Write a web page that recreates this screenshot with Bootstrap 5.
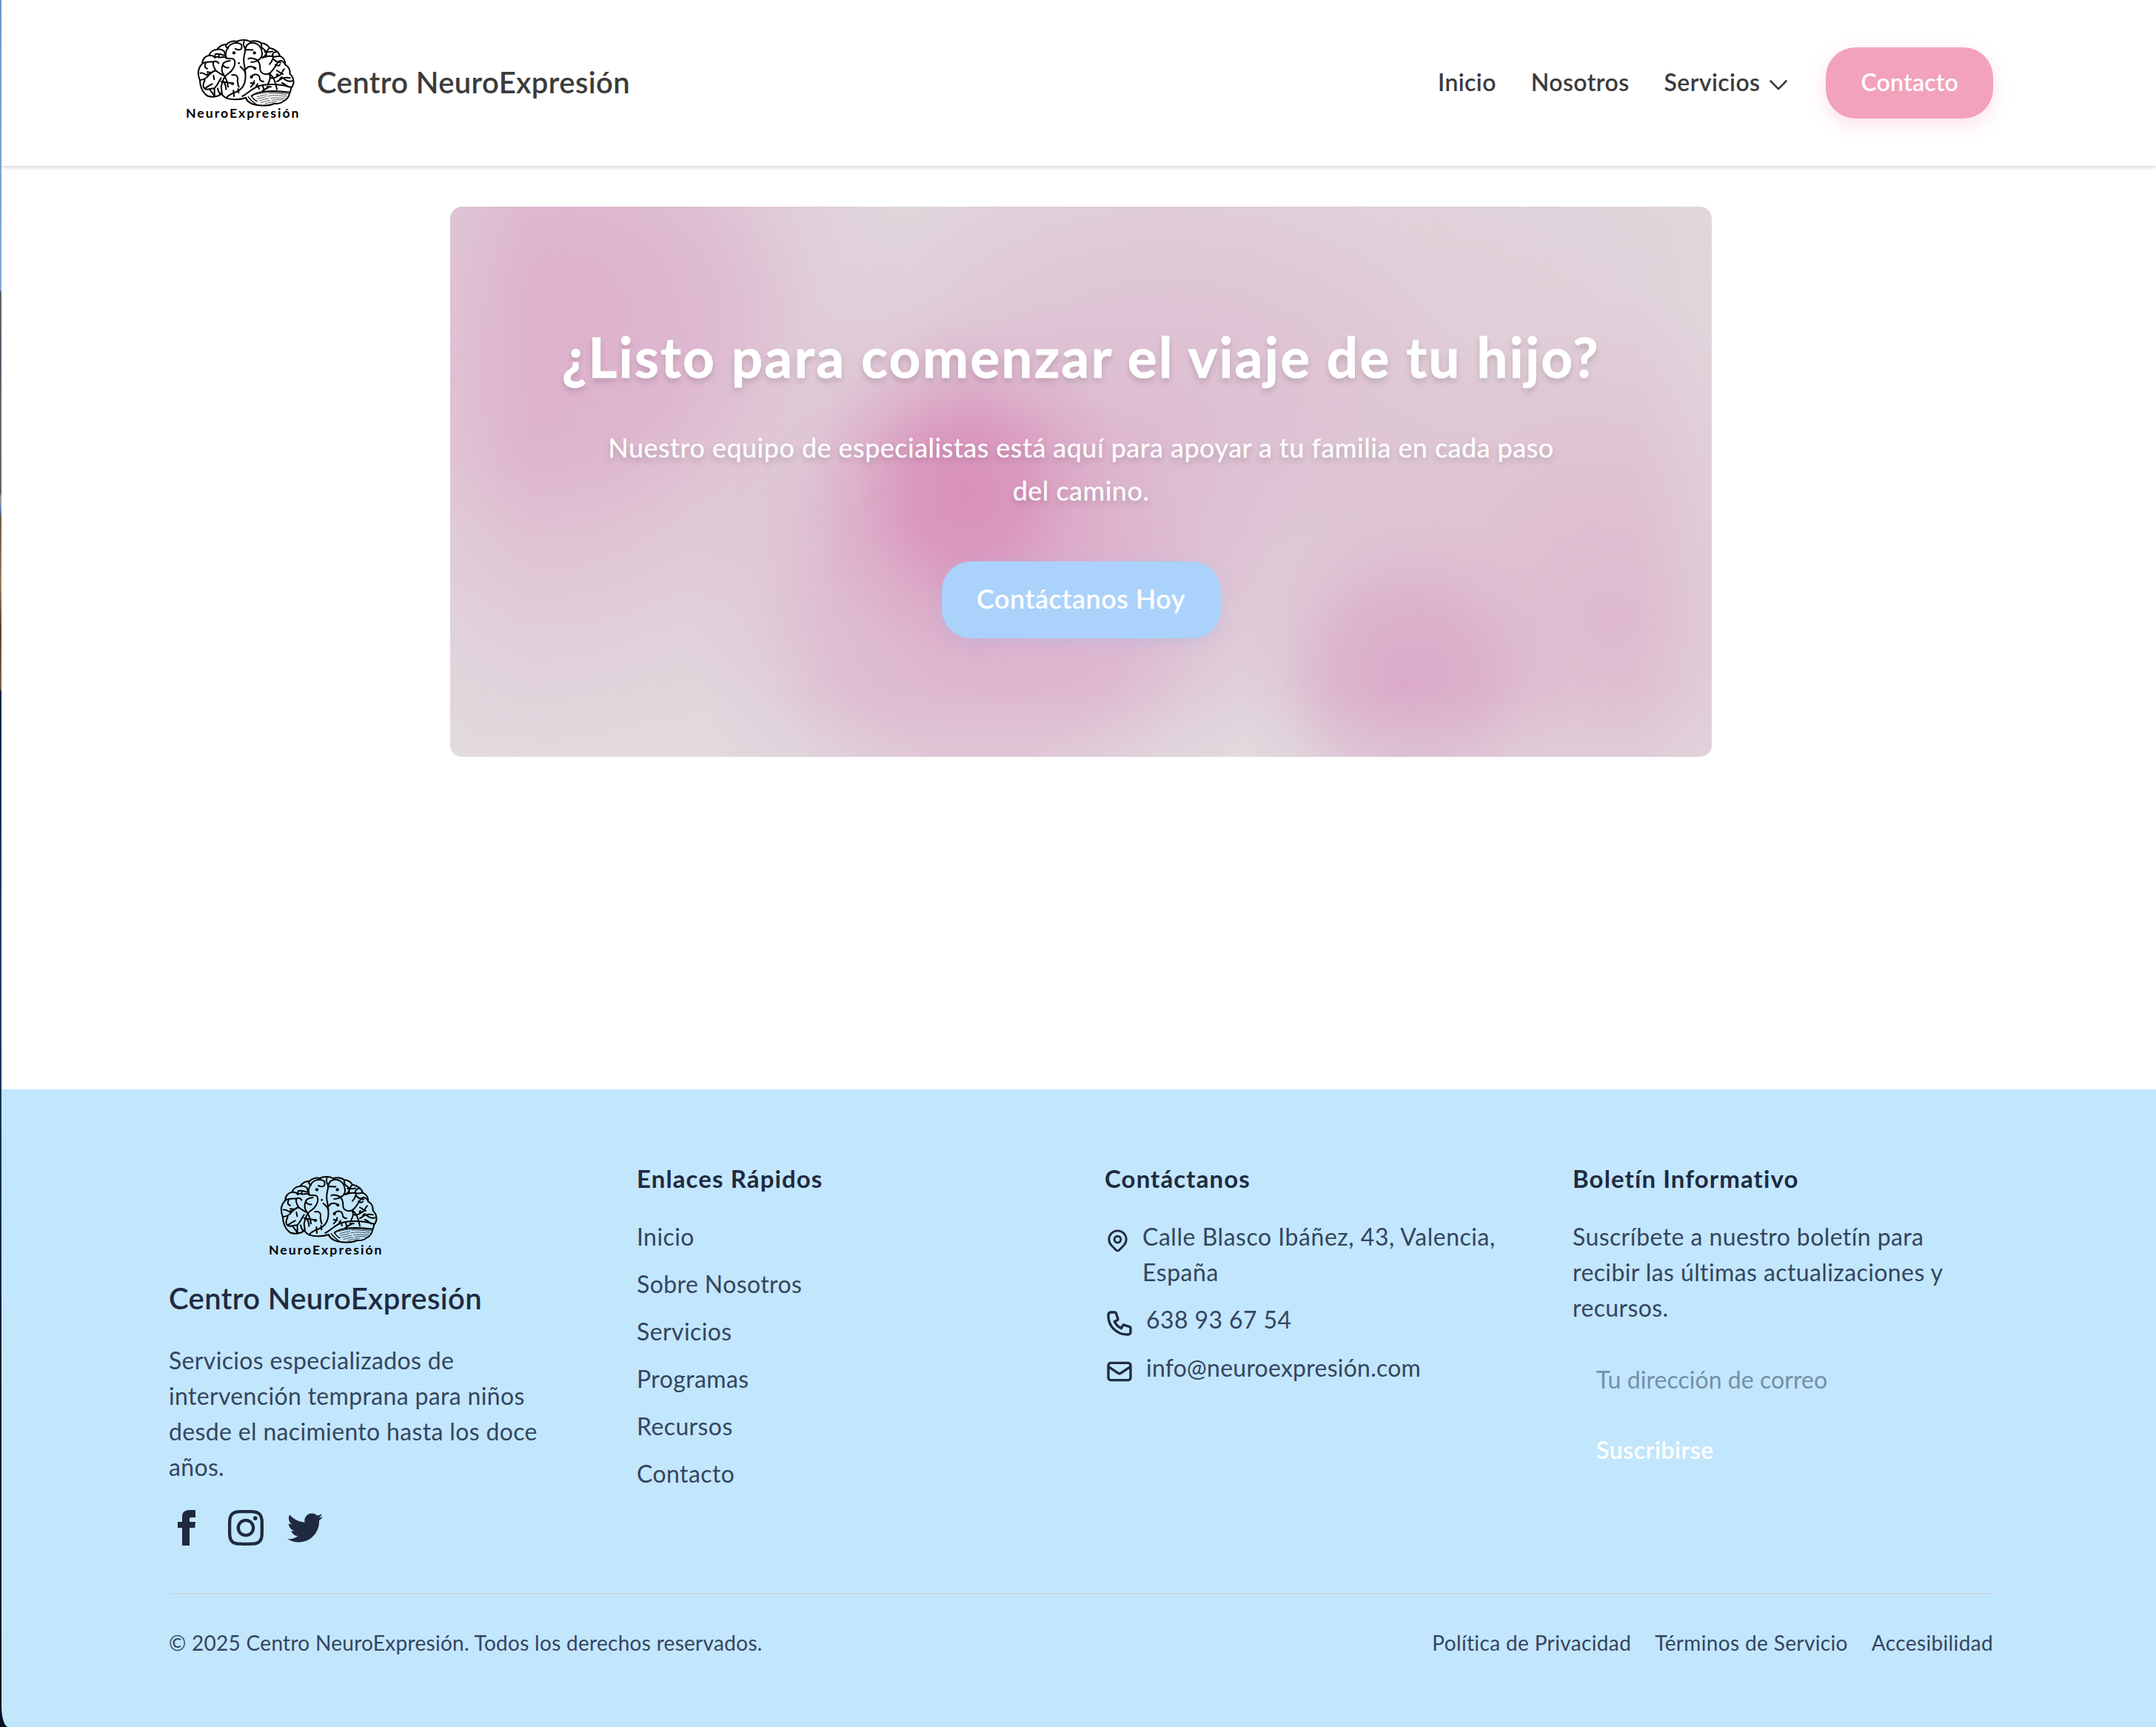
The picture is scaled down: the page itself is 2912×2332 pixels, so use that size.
<!DOCTYPE html>
<html lang="es">
<head>
<meta charset="utf-8">
<meta name="viewport" content="width=device-width, initial-scale=1">
<title>Centro NeuroExpresión</title>
<link href="https://cdn.jsdelivr.net/npm/bootstrap@5.3.0/dist/css/bootstrap.min.css" rel="stylesheet">
<script src="https://cdn.jsdelivr.net/npm/bootstrap@5.3.0/dist/js/bootstrap.bundle.min.js"></script>
<style>
  body {
    font-family: Lato, "Open Sans", sans-serif;
    font-size: 32px;
    line-height: 48px;
    letter-spacing: .4px;
    color: #34455e;
    /* desktop wallpaper showing along the window's left edge */
    background: linear-gradient(#6d97c8 0, #86a9d3 392px, #5f6468 394px, #56606f 500px, #6f6a62 560px, #5d6a5c 665px, #b49c86 672px, #5f8ec4 688px, #6b5c46 700px, #9a835f 790px, #5a452f 850px, #7c6748 930px, #0f2648 934px, #223f6d 1300px, #0b1a33 1900px, #061225 2332px);
  }
  .window { min-height: 2332px; margin-left: 2px; background: #c2e6fc; border-bottom-left-radius: 9px 28px; overflow: hidden; }
  .gutter { padding-left: 226px; padding-right: 220px; }
  .topbar { height: 224px; background: #fff; box-shadow: 0 1px 6px rgba(0,0,0,.22); position: relative; z-index: 1; }
  .topbar a { color: #3b3b3b; text-decoration: none; }
  .brand-name { font-size: 40px; line-height: 60px; font-weight: 600; letter-spacing: .38px; padding-bottom: 2px; }
  .topbar .brand-name { color: #3b3b3b; }
  .logo { width: 200px; height: 150px; flex: none; display: block; }
  .topbar .logo { margin: -14px -2px 0 2px; }
  .menu { gap: 47px; font-weight: 600; }
  .menu > a { padding-bottom: 2px; }
  .chevron { width: 24px; height: 14px; margin: 7px 5px 0 13px; }
  .menu .pill { background: #f2a2bb; color: #fff; border-radius: 40px; padding: 23px 47px 25px; letter-spacing: .2px; box-shadow: 0 8px 24px rgba(242,120,160,.22); }
  main { height: 1247px; background: #fff; padding-top: 55px; }
  .hero {
    width: 1704px; height: 743px; border-radius: 16px; padding-top: 158px; color: #fff; margin-left: 606px;
    background:
      linear-gradient(90deg, rgba(226,220,224,.28), transparent 110px, transparent 1600px, rgba(226,218,222,.4)),
      linear-gradient(0deg, rgba(226,220,224,.3), transparent 90px),
      radial-gradient(ellipse 215px 230px at 695px 385px, rgba(216,135,180,.78), rgba(216,138,182,.66) 35%, rgba(217,150,188,.28) 68%, transparent),
      radial-gradient(ellipse 225px 235px at 1290px 645px, rgba(216,158,195,.72), rgba(216,162,197,.55) 45%, rgba(218,170,200,.2) 75%, transparent),
      radial-gradient(ellipse 400px 420px at 715px 530px, rgba(220,165,199,.72), rgba(220,168,200,.58) 50%, rgba(221,180,206,.22) 78%, transparent),
      radial-gradient(ellipse 480px 420px at 930px 320px, rgba(219,172,204,.55), rgba(220,180,207,.38) 50%, transparent),
      radial-gradient(ellipse 470px 470px at 160px 120px, rgba(220,165,199,.72), rgba(220,170,202,.58) 42%, rgba(222,185,208,.25) 72%, transparent),
      radial-gradient(ellipse 560px 400px at 70px 340px, rgba(223,175,200,.6), rgba(223,182,204,.35) 50%, transparent),
      radial-gradient(ellipse 450px 440px at 1570px 560px, rgba(221,172,200,.68), rgba(222,180,203,.48) 50%, transparent),
      radial-gradient(ellipse 900px 500px at 1200px 240px, rgba(222,192,208,.5), transparent),
      #e1d8dd;
  }
  .hero h1 { font-size: 74px; line-height: 90px; font-weight: 700; letter-spacing: 2.6px; margin-bottom: 49px; -webkit-text-stroke: 1px #fff; text-shadow: 0 5px 9px rgba(0,0,0,.16); }
  .hero p { font-size: 36px; line-height: 57.6px; width: 1300px; margin-bottom: 67px; font-weight: 500; letter-spacing: .43px; text-shadow: 0 5px 9px rgba(0,0,0,.16); }
  .hero .pill { display: inline-block; width: 377px; height: 104px; border-radius: 40px; padding-top: 23px; line-height: 54px; font-size: 36px; font-weight: 600; letter-spacing: .46px; color: #fff; background: #abd2fb; box-shadow: 0 6px 20px rgba(150,180,240,.3); text-decoration: none; }
  footer { padding-top: 96px; }
  footer a { color: inherit; text-decoration: none; }
  .foot-cols { display: grid; grid-template-columns: repeat(4, 568px); column-gap: 64px; height: 519px; }
  .foot-cols .logo { margin: -2px 0 8px 114px; }
  .foot-cols .brand-name { color: #1f2a40; margin-bottom: 30px; padding: 0; }
  .foot-cols h2 { font-size: 33px; line-height: 48px; font-weight: 700; letter-spacing: 1.1px; color: #1f2a40; margin-bottom: 31px; }
  .foot-cols ul { display: flex; flex-direction: column; gap: 16px; margin: 0; }
  .foot-cols .blurb { margin-bottom: 34px; padding-right: 60px; letter-spacing: .34px; }
  .foot-cols svg { color: #1f2a40; }
  .social { gap: 32px; }
  .social svg { width: 48px; height: 48px; }
  .contact li { display: flex; gap: 16px; }
  .contact li:first-child { letter-spacing: .53px; }
  .contact li:last-child { letter-spacing: .24px; }
  .contact svg { width: 40px; height: 40px; margin-top: 9px; flex: 0 0 auto; }
  .contact li:first-child svg { width: 35px; }
  .mail-field { display: block; width: 100%; border: 0; outline: 0; background: none; padding: 24px 32px; margin-top: 24px; height: 96px; font: inherit; letter-spacing: .05px; }
  .mail-field::placeholder { color: #7390a6; opacity: 1; }
  .send { display: block; border: 0; background: none; padding: 24px 32px; color: #fff; font: inherit; font-weight: 600; letter-spacing: .55px; }
  .legal { border-top: 2px solid #c6d8e6; padding-top: 44px; font-size: 28px; line-height: 42px; letter-spacing: .29px; margin-top: 65px; }
  .legal nav { gap: 32px; letter-spacing: .36px; }
</style>
</head>
<body>
<svg class="d-none">
  <symbol id="brain" viewBox="0 0 600 450">
    <g fill="none" stroke="#000" stroke-width="6" stroke-linecap="round" stroke-linejoin="round">
      <path d="M120 235C110 210 112 185 130 168C130 150 140 138 157 134C162 120 176 111 190 110C200 96 213 89 228 90C240 79 256 75 270 78C285 70 310 70 323 78C342 74 360 78 369 85C385 86 396 94 402 104C424 108 441 121 444 137C459 143 466 156 466 172C480 180 486 195 485 210C502 224 504 250 491 264C486 274 489 280 484 286C480 306 470 315 458 320C448 330 432 331 420 330C395 342 350 338 330 330C318 325 308 315 306 306C285 314 250 316 228 308C215 301 207 292 209 284C200 307 152 307 141 290C128 279 120 255 120 235Z"/>
      <path d="M299 78C291 92 303 100 304 112C302 130 295 142 298 162C302 185 307 208 304 232C302 252 290 272 268 282C250 288 232 300 226 307"/>
      <path d="M288 90C294 108 284 118 264 108M285 88C262 78 240 88 232 106C222 122 222 134 228 146C242 150 258 140 262 160C264 178 250 198 238 206C222 214 212 232 206 262L209 284"/>
      <path d="M304 112C306 90 322 80 340 84C358 88 370 104 372 124C374 144 356 160 328 162M304 112C318 110 326 114 334 112"/>
      <path d="M316 148C328 142 340 148 350 152C366 164 364 180 364 192C366 208 384 214 400 208C416 200 428 172 440 158C452 152 458 158 466 172"/>
      <path d="M369 86C366 98 372 106 382 112C396 124 386 138 372 144M402 104C390 116 386 124 390 136M372 144C390 140 404 132 418 140M382 120C396 122 404 122 414 118M418 140C408 128 420 120 430 120M418 140L444 137"/>
      <path d="M190 110C212 106 224 118 222 134C210 134 198 124 182 130M157 134C172 134 178 136 180 144C190 134 198 146 208 142C218 140 224 142 228 146M182 130L180 144M197 133L196 143M228 90C220 96 230 104 234 106"/>
      <path d="M130 168C142 158 160 162 176 160C186 156 192 160 196 166M176 160C168 172 180 186 184 196M144 164C140 174 136 184 150 188M184 196C196 204 208 214 218 216C208 204 206 186 212 174C216 160 228 158 242 156M212 174C222 184 228 186 236 184M184 196C170 200 164 204 156 214M166 204L150 202M122 206C132 202 140 210 150 216M175 216L178 232"/>
      <path d="M120 235C136 232 150 226 156 214M140 234C132 252 130 262 140 270C150 258 160 256 170 250M140 270C150 276 160 268 178 268C190 258 196 240 206 226M158 270C166 282 176 290 178 300M178 268C182 282 176 290 180 298M192 268C196 278 194 286 206 292M214 240C226 252 226 262 226 272M206 240L256 248M218 216C226 228 232 240 234 262"/>
      <path d="M250 214C272 208 276 226 272 238C276 248 272 256 278 262M256 276L258 300M275 270L277 286M284 180C296 190 302 196 304 206M306 190C316 176 334 176 344 188M328 222C338 206 358 210 362 224C362 236 368 240 378 240M340 238C340 250 334 254 326 262M326 246L340 248M354 250L348 258"/>
      <path d="M292 300C318 286 330 268 360 258C392 248 450 250 491 264M330 298C350 282 400 272 484 284M356 258L360 270M374 254L378 270M398 264C384 270 376 276 372 280M392 262L408 262"/>
      <path d="M400 208C410 222 402 236 396 250M400 208C418 216 426 240 432 272M408 226C420 228 432 222 440 216M440 216C458 210 450 198 462 190M432 196C442 200 446 208 456 210M440 236C452 226 466 222 485 226M452 246C464 248 470 258 478 262M462 230C470 240 486 240 494 238M402 170C414 160 412 154 418 140M418 150C430 164 440 160 448 164M432 240C448 236 444 222 452 222M426 172C436 178 440 178 444 172"/>
      <path d="M306 306C312 316 320 326 336 332M316 302C324 316 336 324 350 334M328 298C338 312 344 318 352 320" stroke-width="4"/>
      <path d="M346 294C370 284 430 280 478 290M352 302C366 300 374 294 392 294M400 288C430 286 452 290 470 294M352 310C368 308 376 304 388 302M396 300C424 292 446 300 472 300M360 318C376 314 386 310 398 310M406 308C430 304 440 308 466 308M366 326C380 322 390 318 404 318M412 316C430 312 440 316 456 314M384 330C396 326 410 324 430 322" stroke-width="2"/>
    </g>
    <g><circle cx="258" cy="124" r="6.500"/><circle cx="341" cy="124" r="6.500"/><circle cx="278" cy="166" r="4"/><circle cx="343" cy="187" r="6"/><circle cx="329" cy="222" r="6.500"/><circle cx="434" cy="214" r="6"/><circle cx="252" cy="249" r="6"/><circle cx="152" cy="211" r="5"/></g>
    <text x="63" y="387" font-family="Lato, sans-serif" font-weight="700" font-size="53" textLength="458" lengthAdjust="spacing">NeuroExpresión</text>
  </symbol>
</svg>

<div class="window">
  <header class="topbar gutter d-flex align-items-center justify-content-between">
    <a href="#" class="d-flex align-items-center">
      <svg class="logo"><use href="#brain"/></svg>
      <span class="brand-name">Centro NeuroExpresión</span>
    </a>
    <nav class="menu d-flex align-items-center">
      <a href="#">Inicio</a>
      <a href="#">Nosotros</a>
      <a href="#" class="d-flex align-items-center">Servicios
        <svg class="chevron" viewBox="0 0 24 14" fill="none" stroke="#3b3b3b" stroke-width="2.600" stroke-linecap="round" stroke-linejoin="round"><path d="M1.500 1.500 12 12.200 22.500 1.500"/></svg>
      </a>
      <a href="#" class="pill">Contacto</a>
    </nav>
  </header>

  <main>
    <section class="hero d-flex flex-column align-items-center text-center">
      <h1>¿Listo para comenzar el viaje de tu hijo?</h1>
      <p>Nuestro equipo de especialistas está aquí para apoyar a tu familia en cada paso del camino.</p>
      <a href="#" class="pill">Contáctanos Hoy</a>
    </section>
  </main>

  <footer class="gutter">
    <div class="foot-cols">
      <div>
        <svg class="logo"><use href="#brain"/></svg>
        <div class="brand-name">Centro NeuroExpresión</div>
        <p class="blurb">Servicios especializados de intervención temprana para niños desde el nacimiento hasta los doce años.</p>
        <div class="social d-flex">
          <svg viewBox="0 0 24 24" fill="currentColor"><path d="M9 8h-3v4h3v12h5v-12h3.642l.358-4h-4v-1.667c0-.955.192-1.333 1.115-1.333h2.885v-5h-3.808c-3.596 0-5.192 1.583-5.192 4.615v3.385z"/></svg>
          <svg viewBox="0 0 24 24" fill="currentColor"><path d="M12 2.163c3.204 0 3.584.012 4.850.070 3.252.148 4.771 1.691 4.919 4.919.058 1.265.069 1.645.069 4.849 0 3.205-.012 3.584-.069 4.849-.149 3.225-1.664 4.771-4.919 4.919-1.266.058-1.644.070-4.850.070-3.204 0-3.584-.012-4.849-.070-3.260-.149-4.771-1.699-4.919-4.920-.058-1.265-.070-1.644-.070-4.849 0-3.204.013-3.583.070-4.849.149-3.227 1.664-4.771 4.919-4.919 1.266-.057 1.645-.069 4.849-.069zm0-2.163c-3.259 0-3.667.014-4.947.072-4.358.200-6.780 2.618-6.980 6.980-.059 1.281-.073 1.689-.073 4.948 0 3.259.014 3.668.072 4.948.200 4.358 2.618 6.780 6.980 6.980 1.281.058 1.689.072 4.948.072 3.259 0 3.668-.014 4.948-.072 4.354-.200 6.782-2.618 6.979-6.980.059-1.280.073-1.689.073-4.948 0-3.259-.014-3.667-.072-4.947-.196-4.354-2.617-6.780-6.979-6.980-1.281-.059-1.690-.073-4.949-.073zm0 5.838c-3.403 0-6.162 2.759-6.162 6.162s2.759 6.163 6.162 6.163 6.162-2.759 6.162-6.163c0-3.403-2.759-6.162-6.162-6.162zm0 10.162c-2.209 0-4-1.790-4-4 0-2.209 1.791-4 4-4s4 1.791 4 4c0 2.210-1.791 4-4 4zm6.406-11.845c-.796 0-1.441.645-1.441 1.440s.645 1.440 1.441 1.440c.795 0 1.439-.645 1.439-1.440s-.644-1.440-1.439-1.440z"/></svg>
          <svg viewBox="0 0 24 24" fill="currentColor"><path d="M24 4.557c-.883.392-1.832.656-2.828.775 1.017-.609 1.798-1.574 2.165-2.724-.951.564-2.005.974-3.127 1.195-.897-.957-2.178-1.555-3.594-1.555-3.179 0-5.515 2.966-4.797 6.045-4.091-.205-7.719-2.165-10.148-5.144-1.290 2.213-.669 5.108 1.523 6.574-.806-.026-1.566-.247-2.229-.616-.054 2.281 1.581 4.415 3.949 4.890-.693.188-1.452.232-2.224.084.626 1.956 2.444 3.379 4.600 3.419-2.070 1.623-4.678 2.348-7.290 2.040 2.179 1.397 4.768 2.212 7.548 2.212 9.142 0 14.307-7.721 13.995-14.646.962-.695 1.797-1.562 2.457-2.549z"/></svg>
        </div>
      </div>
      <div>
        <h2>Enlaces Rápidos</h2>
        <ul class="list-unstyled">
          <li><a href="#">Inicio</a></li>
          <li><a href="#">Sobre Nosotros</a></li>
          <li><a href="#">Servicios</a></li>
          <li><a href="#">Programas</a></li>
          <li><a href="#">Recursos</a></li>
          <li><a href="#">Contacto</a></li>
        </ul>
      </div>
      <div>
        <h2>Contáctanos</h2>
        <ul class="list-unstyled contact">
          <li><svg viewBox="0 0 24 24" fill="none" stroke="currentColor" stroke-width="2" stroke-linecap="round" stroke-linejoin="round"><path d="M17.657 16.657L13.414 20.900a1.998 1.998 0 01-2.827 0l-4.244-4.243a8 8 0 1111.314 0z"/><path d="M15 11a3 3 0 11-6 0 3 3 0 016 0z"/></svg><span>Calle Blasco Ibáñez, 43, Valencia, España</span></li>
          <li><svg viewBox="0 0 24 24" fill="none" stroke="currentColor" stroke-width="2" stroke-linecap="round" stroke-linejoin="round"><path d="M3 5a2 2 0 012-2h3.280a1 1 0 01.948.684l1.498 4.493a1 1 0 01-.502 1.210l-2.257 1.130a11.042 11.042 0 005.516 5.516l1.130-2.257a1 1 0 011.210-.502l4.493 1.498a1 1 0 01.684.949V19a2 2 0 01-2 2h-1C9.716 21 3 14.284 3 6V5z"/></svg><span>638 93 67 54</span></li>
          <li><svg viewBox="0 0 24 24" fill="none" stroke="currentColor" stroke-width="2" stroke-linecap="round" stroke-linejoin="round"><path d="M3 8l7.890 5.260a2 2 0 002.220 0L21 8M5 19h14a2 2 0 002-2V7a2 2 0 00-2-2H5a2 2 0 00-2 2v10a2 2 0 002 2z"/></svg><span>info@neuroexpresión.com</span></li>
        </ul>
      </div>
      <div>
        <h2>Boletín Informativo</h2>
        <p class="m-0">Suscríbete a nuestro boletín para recibir las últimas actualizaciones y recursos.</p>
        <input class="mail-field" type="email" placeholder="Tu dirección de correo">
        <button class="send" type="button">Suscribirse</button>
      </div>
    </div>
    <div class="legal d-flex justify-content-between">
      <span>© 2025 Centro NeuroExpresión. Todos los derechos reservados.</span>
      <nav class="d-flex"><a href="#">Política de Privacidad</a><a href="#">Términos de Servicio</a><a href="#">Accesibilidad</a></nav>
    </div>
  </footer>
</div>
</body>
</html>
